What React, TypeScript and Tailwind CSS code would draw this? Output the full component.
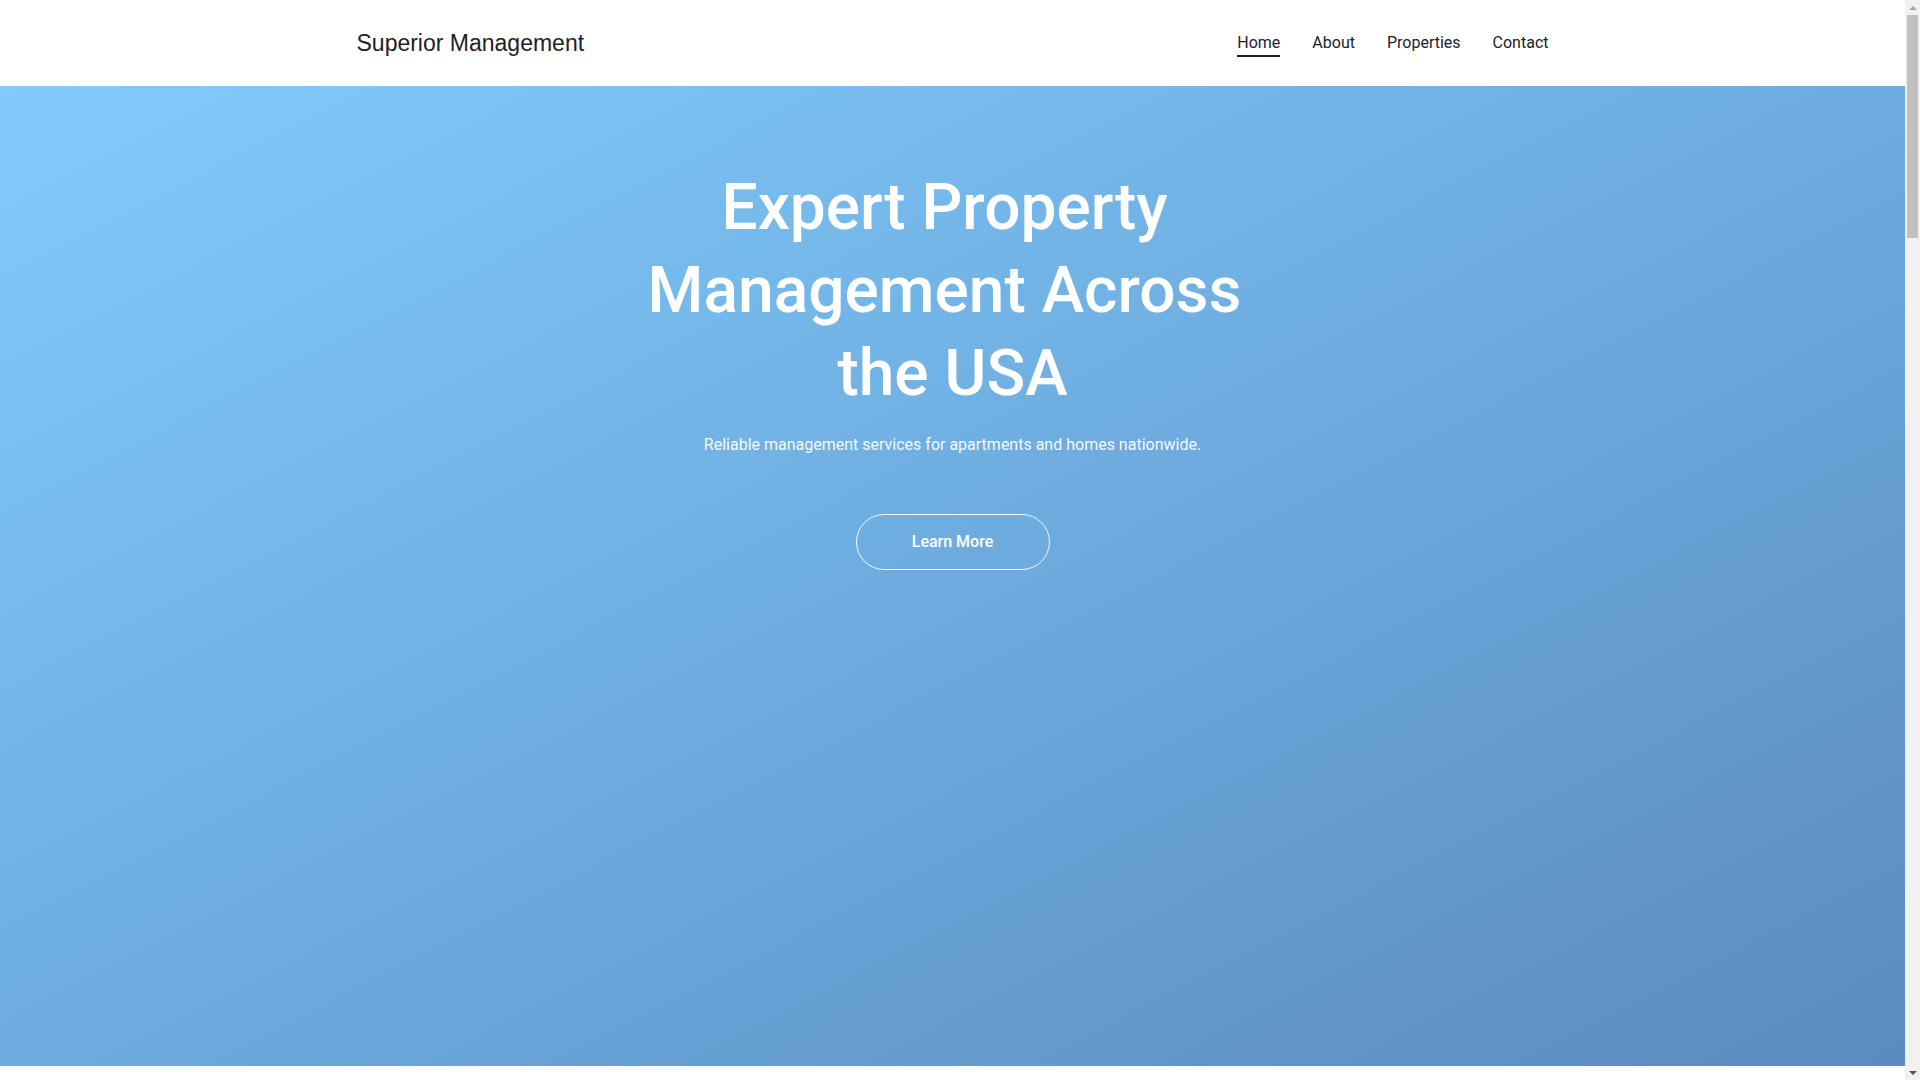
import React from 'react';

const navLinks = ['Home', 'About', 'Properties', 'Contact'];

function Header() {
  return (
    <header className="h-[86px] shrink-0 bg-white">
      <div className="mx-auto flex h-full max-w-[1200px] items-center justify-between px-[4px]">
        <a href="#" className="font-['Liberation_Sans',Arial,sans-serif] text-[23px] text-[#1d2129]">
          Superior Management
        </a>
        <nav className="flex items-center gap-8 pt-px">
          {navLinks.map((link, i) => (
            <a
              key={link}
              href="#"
              className={
                i === 0
                  ? 'border-b-2 border-[#1d2129] text-base leading-6 text-[#1d2129]'
                  : 'border-b-2 border-transparent text-base leading-6 text-[#1d2129]'
              }
            >
              {link}
            </a>
          ))}
        </nav>
      </div>
    </header>
  );
}

function Hero() {
  return (
    <section className="flex h-[980px] shrink-0 flex-col items-center bg-linear-to-br from-[#81ccfd] to-[#5b8bc0] pt-[80px] text-center text-white">
      <h1 className="max-w-[640px] whitespace-break-spaces text-[64px] font-medium leading-[1.3]">
        Expert Property Management Across the USA
      </h1>
      <p className="mt-[17px] text-base leading-6 text-white/95">
        Reliable management services for apartments and homes nationwide.
      </p>
      <a
        href="#"
        className="mt-[57px] flex h-[56px] w-[194px] items-center justify-center rounded-full border border-white/90 text-base font-medium"
      >
        Learn More
      </a>
    </section>
  );
}

// Page is taller than the window in the original, so its scrollbar shows
function Scrollbar() {
  return (
    <div className="flex w-[15px] shrink-0 flex-col items-center bg-[#f1f1f1]">
      <div className="flex h-[15px] w-full items-center justify-center">
        <div className="h-0 w-0 border-x-[4px] border-b-[4px] border-x-transparent border-b-[#a3a3a3]" />
      </div>
      <div className="h-[223px] w-[11px] bg-[#c1c1c1]" />
      <div className="flex-1" />
      <div className="flex h-[15px] w-full items-center justify-center">
        <div className="h-0 w-0 border-x-[4px] border-t-[4px] border-x-transparent border-t-[#505050]" />
      </div>
    </div>
  );
}

export default function App() {
  return (
    <div className="flex h-screen overflow-hidden bg-white font-['Roboto','Liberation_Sans',sans-serif]">
      <main className="flex min-w-0 flex-1 flex-col">
        <Header />
        <Hero />
        <div className="flex-1 bg-white" />
      </main>
      <Scrollbar />
    </div>
  );
}
